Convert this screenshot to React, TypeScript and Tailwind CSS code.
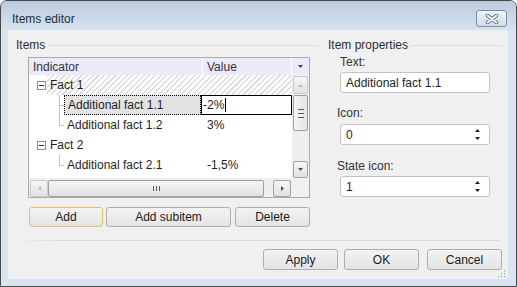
import React from "react";

const hatch =
  "bg-[image:repeating-linear-gradient(135deg,#dedede_0px,#dedede_1.5px,#ffffff_1.5px,#ffffff_4px)]";

function Tri({ dir, color }: { dir: "up" | "down" | "left" | "right"; color: string }) {
  if (dir === "up" || dir === "down") {
    return (
      <svg width="5" height="3" viewBox="0 0 5 3" className="block">
        <polygon points={dir === "up" ? "0,3 5,3 2.5,0" : "0,0 5,0 2.5,3"} fill={color} />
      </svg>
    );
  }
  return (
    <svg width="3" height="5" viewBox="0 0 3 5" className="block">
      <polygon points={dir === "left" ? "3,0 3,5 0,2.5" : "0,0 0,5 3,2.5"} fill={color} />
    </svg>
  );
}

function GroupHeader({ label }: { label: string }) {
  return (
    <div className="h-[14px] flex items-center text-[#2f2f2f]">
      <span className="whitespace-nowrap">{label}</span>
      <div className="flex-1 h-px bg-[#dcdcdc] ml-[3px]" />
    </div>
  );
}

function Expander() {
  return (
    <div className="w-[9px] h-[9px] border border-[#8e8e8e] bg-white flex items-center justify-center">
      <div className="w-[5px] h-px bg-[#2a2a2a]" />
    </div>
  );
}

function ParentRow({ label, hatched }: { label: string; hatched?: boolean }) {
  return (
    <div className="h-[20px] shrink-0 flex">
      <div className="w-[18px] h-full flex items-center pl-[8px]">
        <Expander />
      </div>
      <div className={`flex-1 h-full flex items-center pl-[3px] text-[#1f1f1f] ${hatched ? hatch : ""}`}>
        {label}
      </div>
    </div>
  );
}

function Connector({ last }: { last?: boolean }) {
  return (
    <div className="w-[5px] h-full flex flex-col">
      <div className="h-[11px] border-l border-b border-[#c4c4c4]" />
      <div className={`flex-1 ${last ? "" : "border-l border-[#c4c4c4]"}`} />
    </div>
  );
}

function ChildRow({
  label,
  value,
  last,
  selected,
}: {
  label: string;
  value: string;
  last?: boolean;
  selected?: boolean;
}) {
  return (
    <div className="h-[20px] shrink-0 flex">
      <div className="w-[30px] h-full" />
      <Connector last={last} />
      {selected ? (
        <>
          <div className="w-[137px] h-full border border-dotted border-black bg-[#e3e3e3] flex items-center pl-[3px] text-[#1f1f1f] whitespace-nowrap">
            {label}
          </div>
          <div className="w-[91px] h-full border border-black bg-white flex items-center pl-[1px] text-[#1f1f1f]">
            <span>{value}</span>
            <div className="w-px h-[14px] bg-black ml-[1px]" />
          </div>
        </>
      ) : (
        <>
          <div className="w-[137px] h-full flex items-center pl-[3px] text-[#1f1f1f] whitespace-nowrap">
            {label}
          </div>
          <div className="w-[91px] h-full flex items-center pl-[6px] text-[#1f1f1f]">{value}</div>
        </>
      )}
    </div>
  );
}

function ScrollBtn({
  className,
  disabled,
  children,
}: {
  className: string;
  disabled?: boolean;
  children: React.ReactNode;
}) {
  return (
    <div
      className={`${className} shrink-0 rounded-[2px] border ${
        disabled ? "border-[#c9c9c9]" : "border-[#a3a3a3]"
      } bg-[linear-gradient(to_bottom,#f6f6f6,#e1e1e1)] flex items-center justify-center`}
    >
      {children}
    </div>
  );
}

function VScroll() {
  return (
    <div className="w-[17px] h-full bg-[#efefef] flex flex-col items-center pt-px">
      <ScrollBtn className="w-[15px] h-[18px]" disabled>
        <Tri dir="up" color="#bcbcbc" />
      </ScrollBtn>
      <div className="mt-px w-[15px] h-[36px] shrink-0 rounded-[2px] border border-[#9f9f9f] bg-[linear-gradient(to_right,#f5f5f5,#e3e3e3)] flex flex-col items-center justify-center gap-[3px]">
        <div className="w-[6px] h-px bg-[#5c5c5c]" />
        <div className="w-[6px] h-px bg-[#5c5c5c]" />
        <div className="w-[6px] h-px bg-[#5c5c5c]" />
      </div>
      <div className="flex-1" />
      <ScrollBtn className="w-[15px] h-[17px]">
        <Tri dir="down" color="#4f4f4f" />
      </ScrollBtn>
    </div>
  );
}

function HScroll() {
  return (
    <div className="h-[19px] shrink-0 flex">
      <div className="w-[263px] h-full bg-[#efefef] flex items-start pt-[2px] px-px">
        <ScrollBtn className="w-[18px] h-[17px]" disabled>
          <Tri dir="left" color="#bcbcbc" />
        </ScrollBtn>
        <div className="w-[216px] h-[17px] shrink-0 rounded-[2px] border border-[#9f9f9f] bg-[linear-gradient(to_bottom,#f5f5f5,#e2e2e2)] flex items-center justify-center gap-[2px]">
          <div className="w-px h-[5px] bg-[#5c5c5c]" />
          <div className="w-px h-[5px] bg-[#5c5c5c]" />
          <div className="w-px h-[5px] bg-[#5c5c5c]" />
        </div>
        <div className="flex-1" />
        <ScrollBtn className="w-[18px] h-[17px]">
          <Tri dir="right" color="#4f4f4f" />
        </ScrollBtn>
      </div>
      <div className="w-[17px] h-full bg-[#f0f0f0]" />
    </div>
  );
}

function TreeBox() {
  return (
    <div className="ml-[12px] mt-[5px] w-[282px] h-[141px] border border-[#ababab] bg-white flex flex-col">
      <div className="h-[17px] shrink-0 flex bg-[#eaeafb] text-[#333333]">
        <div className="w-[173px] pl-[4px] flex items-center">Indicator</div>
        <div className="w-px bg-white" />
        <div className="w-[88px] pl-[4px] flex items-center">Value</div>
        <div className="w-px bg-white" />
        <div className="w-[17px] flex items-center justify-center">
          <Tri dir="down" color="#3c3c3c" />
        </div>
      </div>
      <div className="h-[103px] shrink-0 flex">
        <div className="w-[263px] h-full flex flex-col overflow-hidden bg-white">
          <ParentRow label="Fact 1" hatched />
          <ChildRow label="Additional fact 1.1" value="-2%" selected />
          <ChildRow label="Additional fact 1.2" value="3%" last />
          <ParentRow label="Fact 2" />
          <ChildRow label="Additional fact 2.1" value="-1,5%" last />
        </div>
        <VScroll />
      </div>
      <HScroll />
    </div>
  );
}

function Btn({ label, className }: { label: string; className: string }) {
  return (
    <div
      className={`${className} shrink-0 rounded-[3px] border bg-[linear-gradient(to_bottom,#f3f3f3,#e4e4e4)] flex items-center justify-center text-[#1a1a1a]`}
    >
      {label}
    </div>
  );
}

function Spin({ value, className }: { value: string; className: string }) {
  return (
    <div
      className={`${className} w-[150px] h-[21px] rounded-[3px] border border-[#c3c3c3] bg-white flex items-center justify-between pl-[5px] pr-[9px] text-[#1f1f1f]`}
    >
      <span>{value}</span>
      <div className="flex flex-col items-center gap-[5px]">
        <Tri dir="up" color="#1f1f1f" />
        <Tri dir="down" color="#1f1f1f" />
      </div>
    </div>
  );
}

export default function App() {
  return (
    <div className="w-[517px] h-[287px] font-['Liberation_Sans',Arial,sans-serif] text-[12px] leading-[14px]">
      <div className="w-full h-full border border-[#4a4a4a] rounded-t-[7px] bg-[#d9e5f2] flex flex-col overflow-hidden">
        <div className="h-[29px] shrink-0 flex items-start justify-between pl-[11px] pr-[9px] bg-[linear-gradient(to_bottom,#bccbdd,#d6e3f1)]">
          <div className="mt-[10px] leading-[16px] text-[#1e2b3b]">Items editor</div>
          <div className="mt-[9px] w-[31px] h-[17px] rounded-[3px] border border-[#7e8ea3] bg-[linear-gradient(to_bottom,#eef3f9,#d2dde9)] flex items-center justify-center">
            <svg width="14" height="10" viewBox="0 0 14 10" className="block">
              <path d="M2.5 1.5 L11.5 8.5 M11.5 1.5 L2.5 8.5" stroke="#5f6e82" strokeWidth="3.6" strokeLinecap="round" />
              <path d="M2.5 1.5 L11.5 8.5 M11.5 1.5 L2.5 8.5" stroke="#ffffff" strokeWidth="1.8" strokeLinecap="round" />
            </svg>
          </div>
        </div>
        <div className="flex-1 flex pl-[7px] pr-[8px] pb-[7px]">
          <div className="w-[500px] h-[249px] bg-[#f0f0f0] relative flex flex-col pt-[8px]">
            <div className="flex">
              <div className="ml-[8px] w-[302px] flex flex-col">
                <GroupHeader label="Items" />
                <TreeBox />
                <div className="flex ml-[13px] mt-[9px]">
                  <Btn label="Add" className="w-[74px] h-[20px] border-[#efbb6b]" />
                  <Btn label="Add subitem" className="ml-[3px] w-[125px] h-[20px] border-[#adadad]" />
                  <Btn label="Delete" className="ml-[4px] w-[75px] h-[20px] border-[#adadad]" />
                </div>
              </div>
              <div className="ml-[10px] w-[174px] flex flex-col">
                <GroupHeader label="Item properties" />
                <div className="ml-[12px] mt-[3px] text-[#333333]">Text:</div>
                <div className="ml-[12px] mt-[3px] w-[150px] h-[21px] rounded-[3px] border border-[#c3c3c3] bg-white flex items-center pl-[5px] text-[#1f1f1f] whitespace-nowrap">
                  Additional fact 1.1
                </div>
                <div className="ml-[9px] mt-[13px] text-[#333333]">Icon:</div>
                <Spin value="0" className="ml-[12px] mt-[4px]" />
                <div className="ml-[9px] mt-[14px] text-[#333333]">State icon:</div>
                <Spin value="1" className="ml-[12px] mt-[3px]" />
              </div>
            </div>
            <div className="mt-[13px] ml-[8px] mr-[8px] h-px bg-[linear-gradient(to_right,#f0f0f0,#dadada_40px)]" />
            <div className="mt-[8px] flex justify-end pr-[6px]">
              <Btn label="Apply" className="w-[75px] h-[21px] border-[#adadad]" />
              <Btn label="OK" className="ml-[6px] w-[75px] h-[21px] border-[#adadad]" />
              <Btn label="Cancel" className="ml-[8px] w-[75px] h-[21px] border-[#adadad]" />
            </div>
            <svg width="10" height="10" viewBox="0 0 10 10" className="absolute right-[2px] bottom-[1px]">
              <rect x="8" y="2" width="1.2" height="1.2" fill="#9c9c9c" />
              <rect x="5" y="5" width="1.2" height="1.2" fill="#9c9c9c" />
              <rect x="8" y="5" width="1.2" height="1.2" fill="#9c9c9c" />
              <rect x="2" y="8" width="1.2" height="1.2" fill="#9c9c9c" />
              <rect x="5" y="8" width="1.2" height="1.2" fill="#9c9c9c" />
              <rect x="8" y="8" width="1.2" height="1.2" fill="#9c9c9c" />
            </svg>
          </div>
        </div>
      </div>
    </div>
  );
}
